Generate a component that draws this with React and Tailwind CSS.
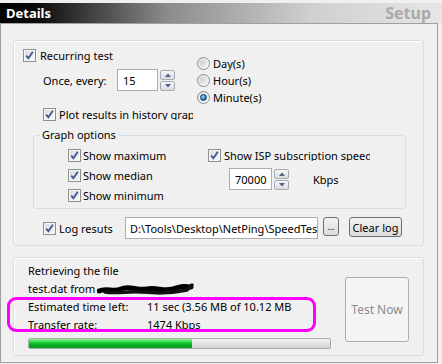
const Check = () => (
  <span className="flex h-[13px] w-[13px] shrink-0 items-center justify-center border border-[#8e8f8f] bg-[linear-gradient(135deg,#d8d8d8,#fbfbfb)] shadow-[inset_0_0_0_1px_#f6f6f6]">
    <svg width="11" height="11" viewBox="0 0 11 11">
      <path d="M2.2 5.6 L4.4 8.2 L8.8 1.8" fill="none" stroke="#3b5796" strokeWidth="1.8" />
    </svg>
  </span>
);

const Radio = ({ on }) => (
  <span className="flex h-[13px] w-[13px] shrink-0 items-center justify-center rounded-full border border-[#8e8f8f] bg-[linear-gradient(135deg,#dcdcdc,#fcfcfc)]">
    {on ? (
      <span className="h-[7px] w-[7px] rounded-full border border-[#17436e] bg-[radial-gradient(circle_at_40%_35%,#a8e0ff,#2a7fc4_55%,#0d4177)]" />
    ) : (
      <span className="h-[7px] w-[7px] rounded-full bg-[linear-gradient(135deg,#cbcbcb,#f2f2f2)]" />
    )}
  </span>
);

const Spin = () => (
  <div className="ml-[2px] flex flex-col gap-[1px]">
    <span className="flex h-[10px] w-[15px] items-center justify-center rounded-[2px] border border-[#a7acb4] bg-[linear-gradient(#f6f6f6,#dcdcdc)]">
      <svg width="6" height="4" viewBox="0 0 6 4">
        <path d="M0 4 L3 0.5 L6 4Z" fill="#4a6294" />
      </svg>
    </span>
    <span className="flex h-[10px] w-[15px] items-center justify-center rounded-[2px] border border-[#a7acb4] bg-[linear-gradient(#f6f6f6,#dcdcdc)]">
      <svg width="6" height="4" viewBox="0 0 6 4">
        <path d="M0 0 L3 3.5 L6 0Z" fill="#4a6294" />
      </svg>
    </span>
  </div>
);

const Scribble = () => (
  <svg width="98" height="14" viewBox="0 0 98 14" className="ml-[2px] mt-[2px]">
    <path
      d="M2 9 C10 5, 16 11, 24 7 S40 9, 50 7 S66 10, 76 7 S88 4, 94 5"
      fill="none"
      stroke="#000"
      strokeWidth="5"
      strokeLinecap="round"
    />
    <path
      d="M8 10 C20 12, 30 9, 44 10 S70 12, 90 8 L95 3"
      fill="none"
      stroke="#111"
      strokeWidth="3.5"
      strokeLinecap="round"
    />
  </svg>
);

export default function App() {
  return (
    <div className="relative h-[364px] w-[442px] overflow-hidden bg-[#f0f0f0] font-['Noto_Sans',sans-serif] text-[11px] leading-none text-black">
      <div className="pt-[3px]">
        <div className="flex h-[20px] items-center justify-between bg-[linear-gradient(to_right,#000_0%,#0a0a0a_8%,#8c8c8c_38%,#cfcfcf_70%,#e6e6e6_100%)] pl-[6px] pr-[11px]">
          <span className="text-[13px] font-bold text-white">Details</span>
          <span className="text-[16px] font-bold text-[#aaaaaa]">Setup</span>
        </div>
      </div>

      <div className="h-[340px] w-[438px] border border-[#a0a0a0] pl-[12px] pt-[16px]">
        {/* settings group */}
        <div className="h-[206px] w-[411px] rounded-[3px] border border-[#d5dfe5] shadow-[inset_1px_1px_0_#fff]">
          <div className="flex">
            <div className="w-[183px] pl-[9px] pt-[8px]">
              <div className="flex h-[13px] items-center gap-[4px]">
                <Check />
                <span>Recurring test</span>
              </div>
              <div className="mt-[7px] flex h-[22px] items-center pl-[20px]">
                <span className="w-[74px]">Once, every:</span>
                <div className="flex h-[22px] w-[41px] items-center border border-[#abadb3] bg-white pl-[5px]">
                  15
                </div>
                <Spin />
              </div>
              <div className="mt-[17px] flex h-[13px] items-center gap-[3px] pl-[20px]">
                <Check />
                <span className="w-[134px] overflow-hidden whitespace-nowrap">
                  Plot results in history graph
                </span>
              </div>
            </div>
            <div className="pt-[14px]">
              <div className="flex h-[17px] items-center gap-[3px]">
                <Radio />
                <span>Day(s)</span>
              </div>
              <div className="flex h-[17px] items-center gap-[3px]">
                <Radio />
                <span>Hour(s)</span>
              </div>
              <div className="flex h-[17px] items-center gap-[3px]">
                <Radio on />
                <span>Minute(s)</span>
              </div>
            </div>
          </div>

          <fieldset className="ml-[19px] mt-[7px] h-[81px] w-[373px] rounded-[3px] border border-[#d5dfe5]">
            <legend className="ml-[6px] px-[2px] leading-[14px]">Graph options</legend>
            <div className="mt-[3px] flex">
              <div className="w-[174px] pl-[34px]">
                <div className="flex h-[20px] items-center gap-[2px]">
                  <Check />
                  <span>Show maximum</span>
                </div>
                <div className="flex h-[20px] items-center gap-[2px]">
                  <Check />
                  <span>Show median</span>
                </div>
                <div className="flex h-[20px] items-center gap-[2px]">
                  <Check />
                  <span>Show minimum</span>
                </div>
              </div>
              <div>
                <div className="flex h-[20px] items-center gap-[3px]">
                  <Check />
                  <span className="w-[146px] overflow-hidden whitespace-nowrap">
                    Show ISP subscription speed
                  </span>
                </div>
                <div className="ml-[21px] mt-[3px] flex items-center">
                  <div className="flex h-[22px] w-[43px] items-center border border-[#abadb3] bg-white pl-[5px]">
                    70000
                  </div>
                  <Spin />
                  <span className="ml-[24px]">Kbps</span>
                </div>
              </div>
            </div>
          </fieldset>

          <div className="mt-[8px] flex items-start pl-[29px]">
            <div className="flex h-[22px] items-center gap-[3px]">
              <Check />
              <span className="w-[66px]">Log resuts</span>
            </div>
            <div className="flex h-[22px] w-[193px] items-center overflow-hidden whitespace-nowrap border border-[#abadb3] bg-white pl-[4px]">
              D:\Tools\Desktop\NetPing\SpeedTest\log.txt
            </div>
            <button className="ml-[5px] flex h-[19px] w-[16px] items-end justify-center overflow-hidden rounded-[3px] border border-[#707070] bg-[linear-gradient(#f2f2f2,#dcdcdc)] pb-[4px] text-[9px] leading-none">
              ...
            </button>
            <button className="ml-[10px] flex h-[20px] w-[53px] items-center justify-center rounded-[3px] border border-[#707070] bg-[linear-gradient(#f2f2f2,#dcdcdc)]">
              Clear log
            </button>
          </div>
        </div>

        {/* progress group */}
        <div className="mt-[11px] flex h-[99px] w-[411px] rounded-[3px] border border-[#d5dfe5] shadow-[inset_1px_1px_0_#fff]">
          <div className="w-[331px] pl-[14px] pt-[3px]">
            <div className="flex h-[18px] items-center">Retrieving the file</div>
            <div className="flex h-[18px] items-center">
              <span>test.dat from</span>
              <Scribble />
            </div>
            <div className="flex h-[18px] items-center">
              <span className="w-[119px]">Estimated time left:</span>
              <span>11 sec (3.56 MB of 10.12 MB</span>
            </div>
            <div className="flex h-[18px] items-center">
              <span className="w-[119px]">Transfer rate:</span>
              <span>1474 Kbps</span>
            </div>
            <div className="mt-[5px] h-[11px] w-[303px] overflow-hidden rounded-[2px] border border-[#a9a9a9] bg-[linear-gradient(#f4f4f4,#e0e0e0_50%,#d4d4d4)]">
              <div className="h-full w-[163px] bg-[linear-gradient(#8ef59b,#2ad43f_35%,#06b025_60%,#0a9a24)]" />
            </div>
          </div>
          <button className="mt-[19px] flex h-[65px] w-[64px] items-center justify-center rounded-[3px] border border-[#adadad] bg-[#f4f4f4] text-[12px] text-[#8c8c8c]">
            Test Now
          </button>
        </div>
      </div>

      <div className="absolute left-[7px] top-[297px] h-[35px] w-[309px] rounded-[9px] border-[3px] border-[#ff00ff]" />
    </div>
  );
}
